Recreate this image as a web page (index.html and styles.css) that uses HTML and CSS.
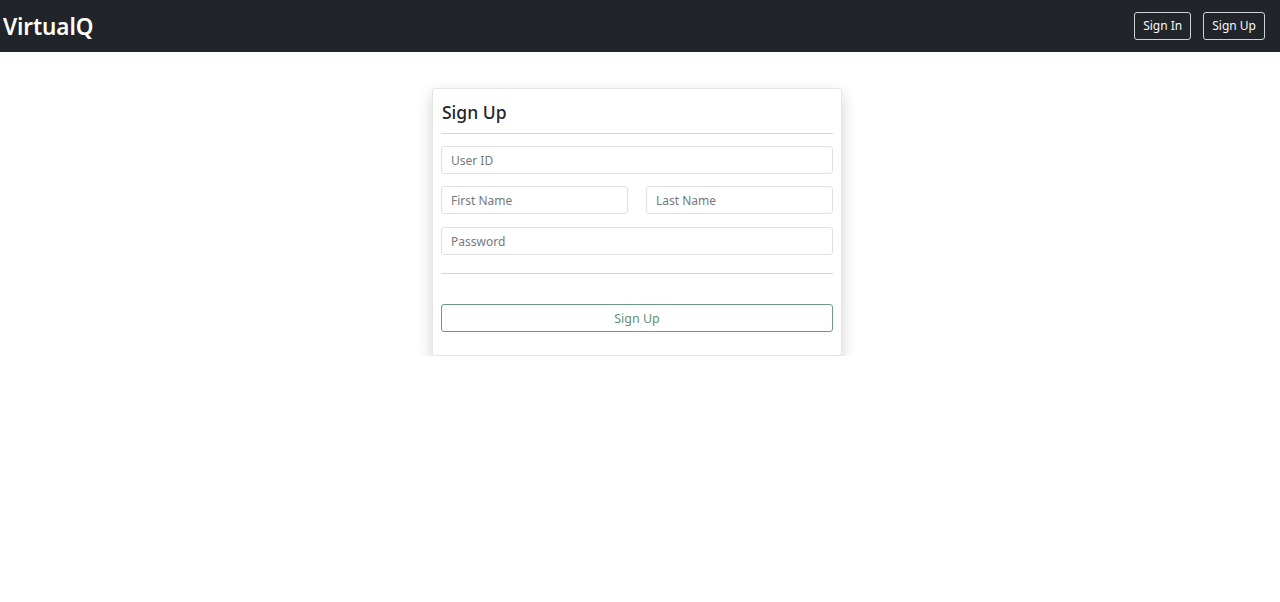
FILE: index.html
```html
<!DOCTYPE html>
<html lang="en">
<head>
<meta charset="utf-8">
<title>VirtualQ - Sign Up</title>
<link rel="stylesheet" href="styles.css">
</head>
<body>
<nav class="navbar">
  <a class="brand" href="#">VirtualQ</a>
  <div class="nav-actions">
    <button class="btn-outline">Sign In</button>
    <button class="btn-outline">Sign Up</button>
  </div>
</nav>
<main class="main">
  <form class="card">
    <h2 class="card-title">Sign Up</h2>
    <hr class="divider">
    <div class="fields">
      <input class="field" type="text" placeholder="User ID">
      <div class="row">
        <input class="field" type="text" placeholder="First Name">
        <input class="field" type="text" placeholder="Last Name">
      </div>
      <input class="field field-last" type="password" placeholder="Password">
    </div>
    <hr class="divider divider-bottom">
    <button class="btn-submit" type="button">Sign Up</button>
  </form>
</main>
</body>
</html>
```
FILE: styles.css
```css
* { box-sizing: border-box; }
html, body { margin: 0; padding: 0; background: #fff; }
body {
  font-family: "Noto Sans", "Open Sans", sans-serif;
  color: #212529;
}
.navbar {
  height: 52px;
  background: #212529;
  display: flex;
  align-items: center;
  justify-content: space-between;
  padding: 0 15px 0 3px;
}
.brand {
  color: #fff;
  text-decoration: none;
  font-size: 22.5px;
  font-weight: 600;
  letter-spacing: -0.1px;
}
.nav-actions {
  display: flex;
  gap: 12px;
  margin-top: -1px;
}
.btn-outline {
  height: 28px;
  padding: 0 8px;
  background: transparent;
  color: #f8f9fa;
  border: 1px solid #cfd2d5;
  border-radius: 3px;
  font-family: inherit;
  font-size: 12px;
}
.main {
  display: flex;
  justify-content: center;
  padding: 36px 6px 0 0;
}
.card {
  width: 410px;
  background: #fff;
  border: 1px solid #e3e5e7;
  border-radius: 3px;
  box-shadow: 0 6px 16px rgba(0,0,0,0.18);
  padding: 9px 8px 23px 8px;
  display: flex;
  flex-direction: column;
}
.card-title {
  margin: 0;
  padding: 1px 0 0 1px;
  font-size: 17.5px;
  font-weight: 500;
  line-height: 26px;
  color: #212529;
}
.divider {
  border: 0;
  border-top: 1px solid #d4d6d8;
  margin: 8px 0 12px 0;
  width: 100%;
}
.divider-bottom { margin: 18px 0 30px 0; }
.fields {
  display: flex;
  flex-direction: column;
  gap: 12px;
}
.row {
  display: flex;
  gap: 18px;
}
.row .field { flex: 1; min-width: 0; }
.field {
  height: 28px;
  width: 100%;
  padding: 0 9px;
  border: 1px solid #dee2e6;
  border-radius: 3px;
  font-family: inherit;
  font-size: 12px;
  color: #212529;
  background: #fff;
}
.field-last { margin-top: 1px; }
.field::placeholder { color: #74797e; }
.btn-submit {
  height: 28px;
  width: 100%;
  background: #fff;
  border: 1px solid #6a9c83;
  border-radius: 3px;
  color: #5f8f78;
  font-family: inherit;
  font-size: 12.5px;
}
```
